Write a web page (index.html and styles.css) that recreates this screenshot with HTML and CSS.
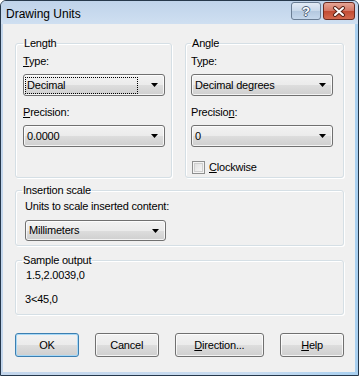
FILE: index.html
```html
<!DOCTYPE html>
<html lang="en">
<head>
  <meta charset="UTF-8" />
  <title>Drawing Units</title>
  <link rel="stylesheet" href="styles.css">
</head>
<body>

  <div class="window">
    <div class="titlebar">
      <span class="title">Drawing Units</span>
      <div class="caption-buttons">
        <span class="cap-btn help-btn">?</span>
        <span class="cap-btn close-btn">
          <svg width="14" height="11" viewBox="0 0 14 11">
            <path d="M3 2 L11 9 M11 2 L3 9" stroke="#5a2418" stroke-width="4" stroke-linecap="round"/>
            <path d="M3 2 L11 9 M11 2 L3 9" stroke="#ffffff" stroke-width="2" stroke-linecap="round"/>
          </svg>
        </span>
      </div>
    </div>

    <div class="client">
      <div class="top-row">
        <fieldset class="group group-length">
          <legend>Length</legend>
          <div class="field-label"><u>T</u>ype:</div>
          <div class="combo">
            <span class="combo-value focused">Decimal</span>
            <svg class="arrow" width="7" height="4" viewBox="0 0 7 4"><polygon points="0,0 7,0 3.5,4" fill="#000"/></svg>
          </div>
          <div class="field-label second"><u>P</u>recision:</div>
          <div class="combo">
            <span class="combo-value">0.0000</span>
            <svg class="arrow" width="7" height="4" viewBox="0 0 7 4"><polygon points="0,0 7,0 3.5,4" fill="#000"/></svg>
          </div>
        </fieldset>

        <fieldset class="group group-angle">
          <legend>Angle</legend>
          <div class="field-label">T<u>y</u>pe:</div>
          <div class="combo">
            <span class="combo-value">Decimal degrees</span>
            <svg class="arrow" width="7" height="4" viewBox="0 0 7 4"><polygon points="0,0 7,0 3.5,4" fill="#000"/></svg>
          </div>
          <div class="field-label second">Precisio<u>n</u>:</div>
          <div class="combo">
            <span class="combo-value">0</span>
            <svg class="arrow" width="7" height="4" viewBox="0 0 7 4"><polygon points="0,0 7,0 3.5,4" fill="#000"/></svg>
          </div>
          <div class="check">
            <span class="checkbox"></span>
            <span><u>C</u>lockwise</span>
          </div>
        </fieldset>
      </div>

      <fieldset class="group group-wide group-insert">
        <legend>Insertion scale</legend>
        <div class="field-label">Units to scale inserted content:</div>
        <div class="combo combo-units">
          <span class="combo-value">Millimeters</span>
          <svg class="arrow" width="7" height="4" viewBox="0 0 7 4"><polygon points="0,0 7,0 3.5,4" fill="#000"/></svg>
        </div>
      </fieldset>

      <fieldset class="group group-wide group-sample">
        <legend>Sample output</legend>
        <div class="sample-line first">1.5,2.0039,0</div>
        <div class="sample-line">3&lt;45,0</div>
      </fieldset>

      <div class="button-row">
        <span class="btn default">OK</span>
        <span class="btn">Cancel</span>
        <span class="btn wide"><u>D</u>irection...</span>
        <span class="btn"><u>H</u>elp</span>
      </div>
    </div>
  </div>

</body>
</html>
```

FILE: styles.css
```css
body {
  margin: 0;
  font-family: 'Liberation Sans', Arial, sans-serif;
  font-size: 11px;
  color: #000;
  background: #fff;
}

.window {
  width: 359px;
  height: 376px;
  box-sizing: border-box;
  border: 1px solid #26384b;
  border-radius: 6px 6px 0 0;
  background: linear-gradient(to right, #c3d6ec, #c9dcf0 70%, #a9d0f0);
  display: flex;
  flex-direction: column;
}

.titlebar {
  height: 23px;
  display: flex;
  align-items: flex-start;
  justify-content: space-between;
  padding: 0 3px 0 5px;
  background: linear-gradient(to bottom, #bfd3ea, #cfdff1);
  border-radius: 5px 5px 0 0;
}

.title {
  font-size: 12px;
  padding-top: 6px;
  letter-spacing: 0;
}

.caption-buttons {
  display: flex;
  gap: 2px;
  margin-top: 1px;
}

.cap-btn {
  height: 18px;
  box-sizing: border-box;
  border: 1px solid #6a7d93;
  border-radius: 3px;
  display: flex;
  align-items: center;
  justify-content: center;
}

.help-btn {
  width: 30px;
  background: linear-gradient(to bottom, #e2ebf6, #c8d8ea 50%, #b3c8df 51%, #c6d8ec);
  color: #fff;
  font-weight: bold;
  font-size: 13px;
  text-shadow: 1px 0 #4c5f78, -1px 0 #4c5f78, 0 1px #4c5f78, 0 -1px #4c5f78;
}

.close-btn {
  width: 32px;
  border-color: #6b2b20;
  background: linear-gradient(to bottom, #e6a595, #d47562 50%, #c24b33 51%, #d46a4f);
}

.client {
  flex: 1;
  margin: 0 3px 3px 2px;
  background: #f0f0f0;
  padding: 13px 11px 0 12px;
  letter-spacing: -0.2px;
}

.top-row {
  display: grid;
  grid-template-columns: 157px 159px;
  column-gap: 13px;
}

.group {
  margin: 0;
  min-width: 0;
  border: 1px solid #d5dfe5;
  border-radius: 3px;
  box-shadow: inset 1px 1px 0 #fff, 1px 1px 0 #fff;
  padding: 4px 6px 3px 7px;
}

.group legend {
  padding: 0 1px;
  line-height: 13px;
}

.group-angle {
  padding-left: 5px;
}

.field-label {
  line-height: 14px;
}

.field-label.second {
  margin-top: 9px;
}

.combo {
  margin-top: 6px;
  width: 142px;
  height: 22px;
  box-sizing: border-box;
  border: 1px solid #707070;
  border-radius: 3px;
  background: linear-gradient(to bottom, #f2f2f2, #ebebeb 50%, #dddddd 51%, #cfcfcf);
  box-shadow: inset 0 0 0 1px rgba(255, 255, 255, 0.75);
  display: flex;
  align-items: center;
  padding: 0 6px 0 2px;
}

.combo-value {
  flex: 1;
  line-height: 15px;
  padding-left: 1px;
  margin-right: 14px;
}

.combo-value.focused {
  outline: 1px dotted #000;
  outline-offset: 0;
}

.check {
  margin-top: 14px;
  display: flex;
  align-items: center;
  gap: 4px;
  line-height: 13px;
  padding-left: 1px;
}

.checkbox {
  width: 13px;
  height: 13px;
  box-sizing: border-box;
  border: 1px solid #8e8f8f;
  background: linear-gradient(135deg, #dcdcdc, #fbfbfb);
  box-shadow: inset 0 0 0 1px #f4f4f4, inset 0 0 0 2px #cfcfcf;
}

.group-wide {
  padding-left: 9px;
}

.group-wide legend {
  margin-left: -3px;
}

.group-insert {
  margin-top: 6px;
  padding-top: 2px;
  padding-bottom: 4px;
}

.combo-units {
  margin-top: 7px;
  width: 141px;
  height: 21px;
}

.group-sample {
  margin-top: 8px;
  padding-top: 1px;
  padding-bottom: 8px;
}

.sample-line {
  line-height: 14px;
  margin-top: 10px;
}

.sample-line.first {
  margin-top: 0;
  padding-left: 1px;
}

.button-row {
  margin-top: 18px;
  display: flex;
  gap: 16px;
}

.btn {
  width: 64px;
  height: 24px;
  box-sizing: border-box;
  border: 1px solid #707070;
  border-radius: 3px;
  background: linear-gradient(to bottom, #f2f2f2, #ebebeb 50%, #dddddd 51%, #cfcfcf);
  box-shadow: inset 0 0 0 1px rgba(255, 255, 255, 0.75);
  display: flex;
  align-items: center;
  justify-content: center;
}

.btn.wide {
  width: 90px;
}

.btn.default {
  border-color: #3c7fb1;
  box-shadow: inset 0 0 0 1px #a7d8f6;
}
```
